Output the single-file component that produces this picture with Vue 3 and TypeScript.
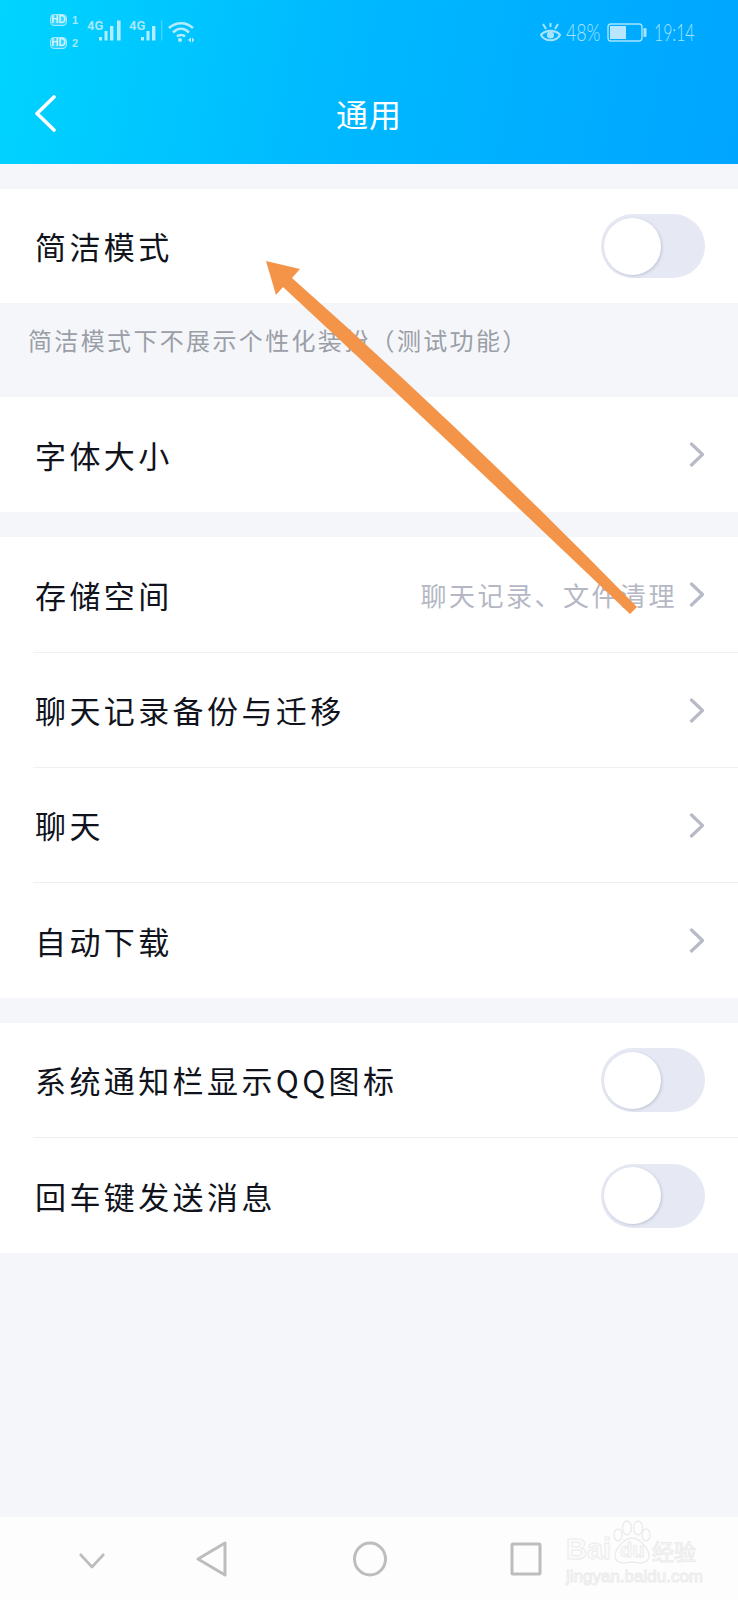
<script setup lang="ts">
interface Row {
  label: string;
  hint?: string;
  toggle?: boolean;
}

const storageRows: Row[] = [
  { label: '存储空间', hint: '聊天记录、文件清理' },
  { label: '聊天记录备份与迁移' },
  { label: '聊天' },
  { label: '自动下载' },
];
const systemRows: Row[] = [
  { label: '系统通知栏显示QQ图标', toggle: true },
  { label: '回车键发送消息', toggle: true },
];
const groups: Row[][] = [[{ label: '字体大小' }], storageRows, systemRows];
</script>

<template>
  <div class="page">
    <header class="header">
      <div class="status">
        <div class="status-left">
          <div class="sims">
            <div class="sim"><span class="hd">HD</span><span class="sim-no">1</span></div>
            <div class="sim"><span class="hd">HD</span><span class="sim-no">2</span></div>
          </div>
          <div v-for="n in 2" :key="n" class="net">
            <span class="net-label">4G</span>
            <svg class="bars" width="24" height="22" viewBox="0 0 24 22">
              <rect x="0" y="17" width="3" height="3.5" />
              <rect x="5.5" y="11" width="3" height="9.5" />
              <rect x="11" y="6" width="3.4" height="14.5" />
              <rect v-if="n === 1" x="18" y="0.5" width="3.6" height="20" />
              <rect v-else x="20" y="0.5" width="1.4" height="20" opacity="0.35" />
            </svg>
          </div>
          <svg class="wifi" width="26" height="22" viewBox="0 0 26 22" fill="none" stroke="#b5ecff" stroke-width="2.5">
            <path d="M1 7 C8 0.5 18 0.5 25 7" />
            <path d="M5 11.5 C10 6.5 16 6.5 21 11.5" />
            <path d="M9 15.5 C11 13.5 15 13.5 17 15.5" />
            <circle cx="12" cy="19" r="2" fill="#b5ecff" stroke="none" />
            <path d="M20 19 l3 -2.5 v5 z M24 16.5 l2.5 2.5 l-2.5 2.5 z" fill="#b5ecff" stroke="none" />
          </svg>
        </div>
        <div class="status-right">
          <svg width="21" height="21" viewBox="0 0 21 21" fill="none" stroke="#a5e4ff" stroke-width="2.2">
            <path d="M1 13 C5 7.5 16 7.5 20 13 C16 20 5 20 1 13 Z" />
            <circle cx="10.5" cy="13" r="3.6" fill="#a5e4ff" stroke="none" />
            <path d="M3 2 L6 7 M18 2 L15 7 M10.5 1 V5" stroke-width="2" />
          </svg>
          <span class="pct">48%</span>
          <svg class="battery" width="40" height="19" viewBox="0 0 40 19" fill="none">
            <rect x="1" y="1" width="34" height="17" rx="3" stroke="#a5e4ff" stroke-width="1.4" />
            <rect x="3" y="3" width="16" height="13" fill="#b9e6ff" />
            <rect x="36.5" y="5" width="3" height="9" rx="1" fill="#a5e4ff" />
          </svg>
          <span class="time">19:14</span>
        </div>
      </div>
      <div class="bar">
        <svg class="back" width="24" height="38" viewBox="0 0 24 38" fill="none" stroke="#fff" stroke-width="3.6" stroke-linecap="round" stroke-linejoin="round">
          <path d="M20 3 L3 19.5 L20 36" />
        </svg>
        <h1 class="title">通用</h1>
      </div>
    </header>

    <main class="content">
      <section class="group">
        <div class="row">
          <span class="label">简洁模式</span>
          <span class="switch"><span class="knob"></span></span>
        </div>
      </section>
      <p class="caption">简洁模式下不展示个性化装扮（测试功能）</p>

      <div class="groups">
        <section v-for="(group, i) in groups" :key="i" class="group">
          <div v-for="row in group" :key="row.label" class="row">
            <span class="label">{{ row.label }}</span>
            <span v-if="row.toggle" class="switch"><span class="knob"></span></span>
            <template v-else>
              <span v-if="row.hint" class="hint">{{ row.hint }}</span>
              <svg class="chev" width="16" height="25" viewBox="0 0 16 25" fill="none" stroke="#b8bbc7" stroke-width="3.2" stroke-linecap="round" stroke-linejoin="round">
                <path d="M2.5 2 L13.5 12.5 L2.5 23" />
              </svg>
            </template>
          </div>
        </section>
      </div>
    </main>

    <nav class="nav">
      <svg width="28" height="18" viewBox="0 0 28 18" fill="none" stroke="#bdbdbd" stroke-width="2.6" stroke-linejoin="round">
        <path d="M2 2 L14 15 L26 2" />
      </svg>
      <svg width="32" height="36" viewBox="0 0 32 36" fill="none" stroke="#bdbdbd" stroke-width="3" stroke-linejoin="round">
        <path d="M29 2 V34 L2 18 Z" />
      </svg>
      <svg width="36" height="36" viewBox="0 0 36 36" fill="none" stroke="#bdbdbd" stroke-width="3">
        <ellipse cx="18" cy="18" rx="15.5" ry="16" />
      </svg>
      <svg width="32" height="34" viewBox="0 0 32 34" fill="none" stroke="#bdbdbd" stroke-width="3" stroke-linejoin="round">
        <rect x="2" y="2" width="28" height="30" rx="1" />
      </svg>
    </nav>

    <svg class="arrow" width="738" height="1600" viewBox="0 0 738 1600">
      <path
        d="M266 261 L300 269 L292 278 Q466 432 637 607 L630 614 Q452 444 283 287 L276 295 Z"
        fill="#f39448"
      />
    </svg>

    <div class="watermark">
      <div class="wm-top">
        <span class="wm-bai">Bai</span>
        <span class="wm-paw">
          <svg width="40" height="46" viewBox="0 0 40 46" fill="none" stroke="#ececec" stroke-width="1.4">
            <ellipse cx="6" cy="15" rx="4" ry="6" />
            <ellipse cx="15" cy="8" rx="4.5" ry="7" />
            <ellipse cx="26" cy="8" rx="4.5" ry="7" />
            <ellipse cx="34" cy="15" rx="4" ry="6" />
            <path d="M20 18 C28 18 38 30 37 37 C35 45 26 43 20 42 C14 43 5 45 3 37 C2 30 12 18 20 18 Z" />
          </svg>
          <span class="wm-du">du</span>
        </span>
        <span class="wm-jy">经验</span>
      </div>
      <div class="wm-url">jingyan.baidu.com</div>
    </div>
  </div>
</template>

<style>
html,
body {
  margin: 0;
  background: #f4f6fa;
}
</style>

<style scoped>
.page {
  position: relative;
  width: 738px;
  height: 1600px;
  overflow: hidden;
  display: flex;
  flex-direction: column;
  background: #f4f6fa;
  font-family: "Noto Sans CJK SC", "Noto Sans", sans-serif;
}

.header {
  height: 164px;
  flex: none;
  background: linear-gradient(100deg, #00d4ff 0%, #00b9ff 45%, #00a5ff 100%);
}
.status {
  height: 66px;
  box-sizing: border-box;
  padding: 14px 45px 0 50px;
  display: flex;
  justify-content: space-between;
  align-items: flex-start;
}
.status-left {
  display: flex;
  align-items: flex-start;
}
.sims {
  display: flex;
  flex-direction: column;
  gap: 11px;
  width: 37px;
}
.sim {
  display: flex;
  align-items: center;
  gap: 5px;
  height: 12px;
}
.hd {
  width: 17px;
  height: 12px;
  box-sizing: border-box;
  border: 1.5px solid #a5e8ff;
  border-radius: 4px;
  background: rgba(165, 232, 255, 0.3);
  color: #d6f5ff;
  font: bold 10px/9px "Liberation Sans", sans-serif;
  text-align: center;
}
.sim-no {
  color: #a5e8ff;
  font: bold 11px/12px "Liberation Sans", sans-serif;
}
.net {
  display: flex;
  align-items: flex-start;
  margin-top: 6px;
  width: 42px;
}
.net-label {
  color: #a5e8ff;
  font: bold 13px/12px "Liberation Sans Narrow", "Roboto", sans-serif;
  width: 12px;
  flex: none;
}
.bars {
  fill: #b5ecff;
  flex: none;
}
.wifi {
  margin: 7px 0 0 -3px;
}
.status-right {
  display: flex;
  align-items: center;
  height: 28px;
  color: #a5e4ff;
  margin-top: 4px;
}
.pct {
  width: 34px;
  margin: 0 7px 0 5px;
  font: 300 24px/28px "Lato", sans-serif;
  white-space: nowrap;
  transform: scaleX(0.74);
  transform-origin: left center;
}
.battery {
  flex: none;
}
.time {
  width: 39px;
  margin-left: 7px;
  font: 300 24px/28px "Lato", sans-serif;
  white-space: nowrap;
  transform: scaleX(0.66);
  transform-origin: left center;
}

.bar {
  height: 94px;
  display: flex;
  align-items: center;
  justify-content: center;
  position: relative;
}
.back {
  position: absolute;
  left: 34px;
  top: 28px;
}
.title {
  margin: 0;
  color: #fff;
  font-size: 32px;
  line-height: 40px;
  font-weight: 400;
  letter-spacing: 1px;
}

.content {
  flex: 1;
  padding-top: 25px;
}
.content > .group .row {
  height: 114px;
}
.group {
  background: #fff;
}
.groups .group:nth-child(2) .row:last-child {
  height: 116px;
}
.groups .group:nth-child(3) .row:first-child {
  height: 114px;
}
.groups .group:nth-child(3) .row:last-child {
  height: 116px;
}
.row {
  height: 115px;
  margin-left: 33px;
  padding-right: 33px;
  display: flex;
  align-items: center;
  box-sizing: border-box;
  border-top: 1px solid #eff0f3;
}
.row:first-child {
  border-top: none;
}
.label {
  flex: 1;
  padding-left: 2px;
  color: #10131c;
  font-size: 31px;
  line-height: 40px;
  letter-spacing: 3.4px;
}
.hint {
  color: #b5b8c4;
  font-size: 26px;
  line-height: 40px;
  letter-spacing: 2.5px;
  margin-right: 12px;
}
.chev {
  flex: none;
}
.switch {
  width: 104px;
  height: 64px;
  border-radius: 32px;
  background: #e6e9f4;
  display: flex;
  align-items: center;
  padding-left: 3px;
  box-sizing: border-box;
  flex: none;
}
.knob {
  width: 57px;
  height: 57px;
  border-radius: 50%;
  background: #fff;
  box-shadow: 1px 1px 3px rgba(120, 125, 150, 0.35);
}
.caption {
  margin: 0;
  height: 94px;
  box-sizing: border-box;
  padding: 19px 0 0 28px;
  color: #9b9ea6;
  font-size: 24px;
  line-height: 36px;
  letter-spacing: 2.35px;
  white-space: nowrap;
}
.groups {
  display: flex;
  flex-direction: column;
  gap: 25px;
}

.nav {
  height: 83px;
  flex: none;
  background: #fdfdfd;
  display: grid;
  grid-template-columns: 78px 28px 90px 32px 124px 36px 122px 32px;
  align-items: center;
}
.nav svg:nth-child(1) {
  grid-column: 2;
  margin-top: 5px;
}
.nav svg:nth-child(2) {
  grid-column: 4;
}
.nav svg:nth-child(3) {
  grid-column: 6;
}
.nav svg:nth-child(4) {
  grid-column: 8;
}

.arrow {
  position: absolute;
  left: 0;
  top: 0;
  pointer-events: none;
}
.watermark {
  position: absolute;
  left: 566px;
  top: 1520px;
  width: 132px;
  color: #fbfbfb;
  -webkit-text-stroke: 1px #ececec;
  font-family: "Liberation Sans", sans-serif;
}
.wm-top {
  display: flex;
  align-items: flex-end;
  height: 44px;
}
.wm-bai {
  font-size: 29px;
  line-height: 30px;
  font-weight: 700;
  width: 46px;
  flex: none;
}
.wm-paw {
  position: relative;
  width: 40px;
  height: 44px;
  flex: none;
}
.wm-paw svg {
  position: absolute;
  left: 0;
  top: 0;
}
.wm-du {
  position: absolute;
  left: 8px;
  top: 18px;
  font-size: 20px;
  line-height: 24px;
  font-weight: 700;
}
.wm-jy {
  font-family: "Noto Sans CJK SC", sans-serif;
  font-size: 22px;
  line-height: 28px;
  white-space: nowrap;
}
.wm-url {
  font-size: 17px;
  line-height: 20px;
  margin-top: 3px;
  white-space: nowrap;
}
</style>
